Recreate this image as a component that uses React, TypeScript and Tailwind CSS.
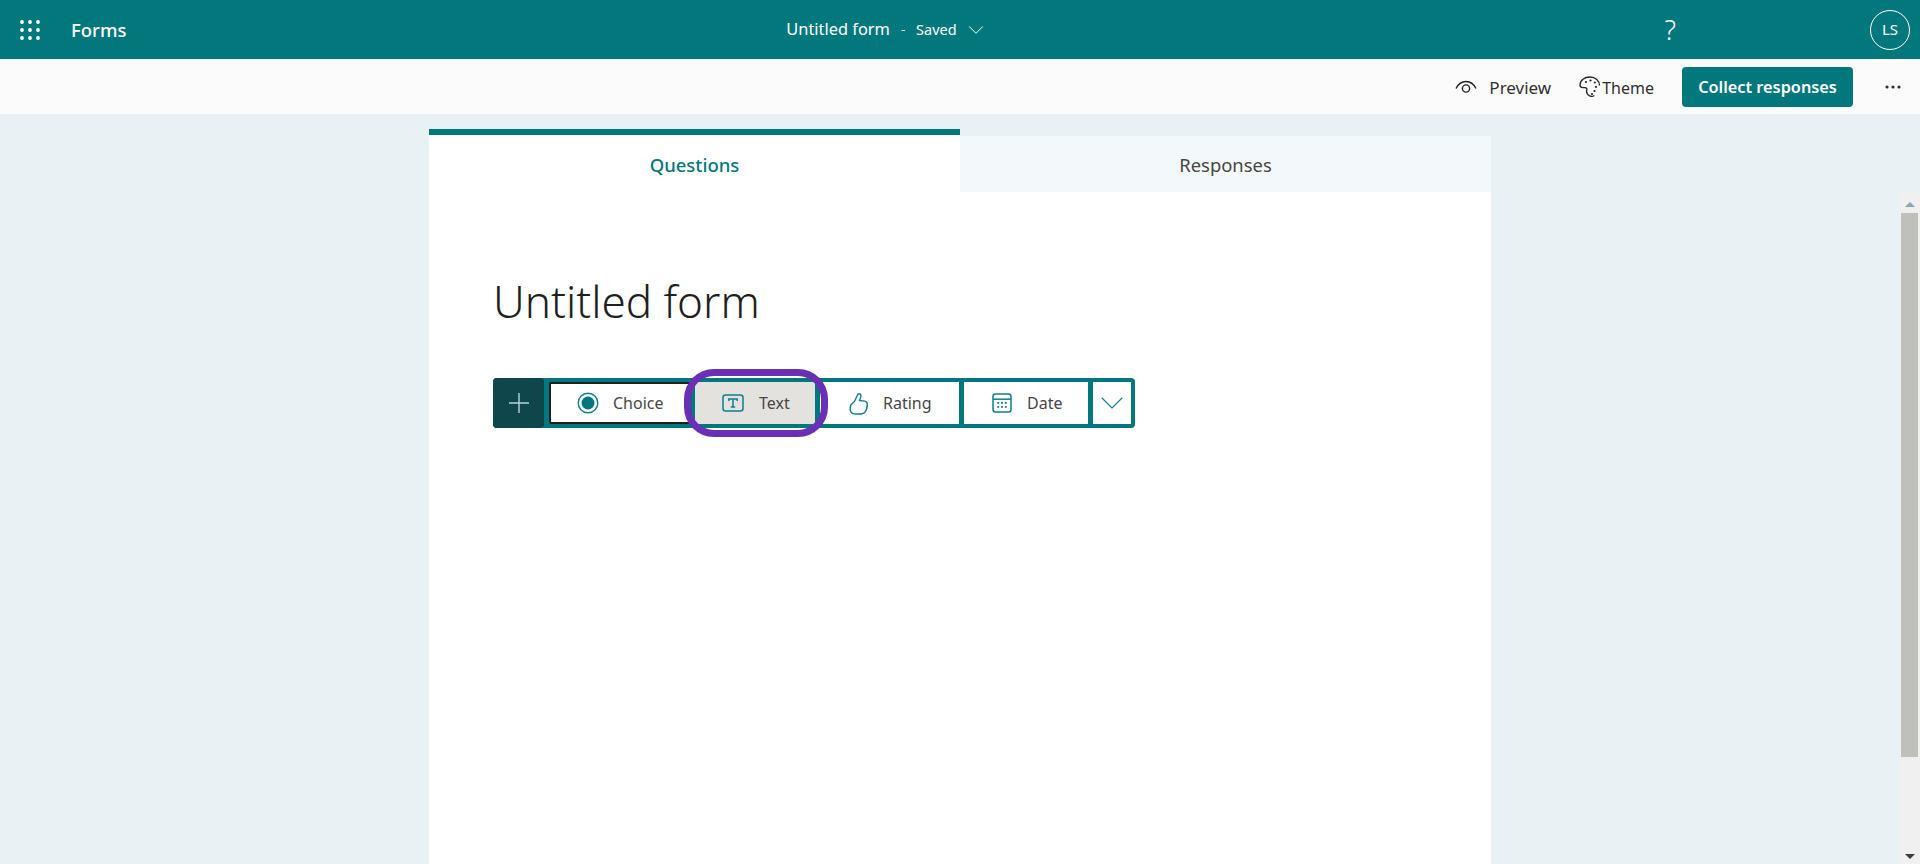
import { ChevronDown } from 'lucide-react';

const font = { fontFamily: '"Noto Sans", "Open Sans", sans-serif' };

function Waffle() {
  return (
    <svg width="20" height="20" viewBox="0 0 20 20" fill="#fff">
      {[2, 10, 18].map((y) =>
        [2, 10, 18].map((x) => <circle key={`${x}-${y}`} cx={x} cy={y} r="1.9" />),
      )}
    </svg>
  );
}

function EyeIcon() {
  return (
    <svg width="22" height="14" viewBox="0 0 22 14" fill="none" stroke="#242424" strokeWidth="1.4">
      <path d="M1 8.5C3.5 3.5 7 1.5 11 1.5s7.5 2 10 7" />
      <circle cx="11" cy="8.5" r="3.6" />
    </svg>
  );
}

function PaletteIcon() {
  return (
    <svg width="22" height="22" viewBox="0 0 22 22" fill="none" stroke="#242424" strokeWidth="1.3">
      <path d="M20.5 9.5C20.5 5 16.5 1 11 1 5.5 1 1 4.5 1 9c0 1.8 1.3 2.6 3 2.6h1.8c1.7 0 2.4 1 2 2.3-.5 1.9.1 4.6 2.9 6 2 .9 3.6.6 4.6-.5" />
      <circle cx="7" cy="6" r="1.1" fill="#242424" stroke="none" />
      <circle cx="11.5" cy="4.5" r="1.1" fill="#242424" stroke="none" />
      <circle cx="15.8" cy="6.5" r="1.1" fill="#242424" stroke="none" />
      <circle cx="17" cy="11" r="1.1" fill="#242424" stroke="none" />
      <circle cx="15.5" cy="15" r="1.1" fill="#242424" stroke="none" />
      <circle cx="13" cy="18" r="1.1" fill="#242424" stroke="none" />
    </svg>
  );
}

function MoreIcon() {
  return (
    <svg width="16" height="4" viewBox="0 0 16 4" fill="#323130">
      <circle cx="2" cy="2" r="1.6" />
      <circle cx="8" cy="2" r="1.6" />
      <circle cx="14" cy="2" r="1.6" />
    </svg>
  );
}

function RadioIcon() {
  return (
    <svg width="22" height="22" viewBox="0 0 22 22" fill="none">
      <circle cx="11" cy="11" r="9.8" stroke="#0f7f8c" strokeWidth="1.4" />
      <circle cx="11" cy="11" r="6.5" fill="#03787c" />
    </svg>
  );
}

function TextIcon() {
  return (
    <svg width="22" height="18" viewBox="0 0 22 18" fill="none" stroke="#0f7f8c" strokeWidth="1.5">
      <rect x="1" y="1" width="20" height="16" rx="2.5" />
      <path d="M6.8 7V5h8.4v2M11 5v8M8.8 13h4.4" />
    </svg>
  );
}

function ThumbIcon() {
  return (
    <svg width="20" height="23" viewBox="0 0 20 23" fill="none" stroke="#0f7f8c" strokeWidth="1.4" strokeLinejoin="round">
      <path d="M2 12.5 5.5 9.5 8.5 3c.4-1.6 3-1.7 3.4.3.3 1.6-.8 4-1.4 5.2l5.2.6c2 .3 2.6 1.5 2.6 3 0 2.8-1 6.6-2.6 8.4-1 1-2.4 1.5-4.2 1.5H7c-2.5 0-4.6-.9-5.4-2.8-.6-1.6-.4-4.2.4-6.7Z" />
    </svg>
  );
}

function CalendarIcon() {
  return (
    <svg width="20" height="20" viewBox="0 0 20 20" fill="none">
      <rect x="1" y="1" width="18" height="18" rx="2.5" stroke="#0f7f8c" strokeWidth="1.5" />
      <path d="M1 6.2h18" stroke="#0f7f8c" strokeWidth="1.5" />
      {[6.2, 10, 13.8].map((x) => (
        <rect key={x} x={x - 0.9} y="9" width="1.8" height="1.8" fill="#0f7f8c" />
      ))}
      {[6.2, 10, 13.8].map((x) => (
        <rect key={x} x={x - 0.9} y="13" width="1.8" height="1.8" fill="#0f7f8c" />
      ))}
    </svg>
  );
}

export default function App() {
  return (
    <div className="flex h-[864px] flex-col overflow-hidden bg-[#e9f1f4]" style={font}>
      <header className="flex h-[59px] shrink-0 items-center bg-[#03787c] text-white">
        <div className="flex w-[60px] justify-center">
          <Waffle />
        </div>
        <span className="ml-[11px] text-[18.5px] font-medium">Forms</span>
        <div className="flex flex-1 items-center justify-center pr-[16px]">
          <span className="text-[16.4px]">Untitled form</span>
          <span className="ml-[11px] text-[13px]">-</span>
          <span className="ml-[11px] text-[14.5px]">Saved</span>
          <ChevronDown size={26} strokeWidth={0.9} className="ml-[6px]" />
        </div>
        <span className="mr-[194px] text-[27px] leading-none font-light">?</span>
        <div className="mr-[10px] flex h-10 w-10 items-center justify-center rounded-full border border-white text-[15px]">
          LS
        </div>
      </header>

      <div className="flex h-[55px] shrink-0 items-center justify-end bg-[#fbfbfb] text-[#323130]">
        <EyeIcon />
        <span className="ml-[12px] pt-[2px] text-[17px]">Preview</span>
        <div className="ml-[28px]">
          <PaletteIcon />
        </div>
        <span className="ml-[1px] pt-[2px] text-[16px]">Theme</span>
        <button className="ml-[28px] h-10 w-[171px] rounded bg-[#03787c] pt-[2px] text-[16.3px] font-semibold text-white">
          Collect responses
        </button>
        <div className="mr-[19px] ml-[32px]">
          <MoreIcon />
        </div>
      </div>

      <main className="relative flex-1 pt-[15px]">
        <div className="mx-auto flex h-full w-[1062px] flex-col bg-white">
          <div className="flex h-[63px] shrink-0">
            <div className="flex w-1/2 items-center justify-center border-t-[6px] border-[#03787c] pt-[2px] text-[18.5px] font-medium text-[#03787c]">
              Questions
            </div>
            <div className="flex w-1/2 flex-col">
              <div className="h-[7px] bg-[#e9f1f4]" />
              <div className="flex flex-1 items-center justify-center bg-[#f3f8fa] pt-[2px] text-[18.4px] text-[#484644]">
                Responses
              </div>
            </div>
          </div>

          <div className="px-[64px] pt-[86px]">
            <h1 className="text-[44px] leading-[46px] font-light text-[#1f1f1f]">Untitled form</h1>

            <div className="mt-[54px] flex h-[50px] w-[642px] rounded bg-[#03787c] text-[16px] text-[#484644]">
              <div className="flex w-[51px] shrink-0 items-center justify-center rounded bg-[#0f464c]">
                <svg width="20" height="20" viewBox="0 0 20 20" stroke="#b7d4dc" strokeWidth="1.4">
                  <path d="M10 0v20M0 10h20" />
                </svg>
              </div>
              <div className="relative flex flex-1 gap-[5px] py-[4px] pr-[4px] pl-[5px]">
                <div className="flex w-[141px] shrink-0 items-center gap-[14px] rounded-[2px] border-[2px] border-[#1f1f1f] bg-white pl-[26px]">
                  <RadioIcon />
                  <span>Choice</span>
                </div>
                <div className="flex w-[120px] shrink-0 items-center gap-[15px] rounded-[2px] bg-[#e3e2df] pl-[27px]">
                  <TextIcon />
                  <span>Text</span>
                </div>
                <div className="flex w-[139px] shrink-0 items-center gap-[14px] bg-white pl-[29px]">
                  <ThumbIcon />
                  <span>Rating</span>
                </div>
                <div className="flex w-[124px] shrink-0 items-center gap-[15px] bg-white pl-[28px]">
                  <CalendarIcon />
                  <span>Date</span>
                </div>
                <div className="flex w-[38px] shrink-0 items-center justify-center overflow-hidden bg-white">
                  <ChevronDown size={40} strokeWidth={0.65} className="shrink-0 text-[#0f7f8c]" />
                </div>
                {/* annotation ring drawn over the Text button */}
                <div className="absolute top-[-9px] left-[140px] h-[68px] w-[144px] rounded-[30px] border-[7px] border-[#6a2fb5]" />
              </div>
            </div>
          </div>
        </div>

        {/* window scrollbar */}
        <div className="absolute top-[78px] right-0 bottom-0 flex w-[21px] flex-col items-center bg-[#f0f0f0]">
          <div className="flex h-[21px] w-full items-center justify-center pt-[3px]">
            <div className="h-0 w-0 border-x-[5px] border-b-[5px] border-x-transparent border-b-[#8ea3ad]" />
          </div>
          <div className="h-[544px] w-[17px] bg-[#bfbfbc]" />
          <div className="flex-1" />
          <div className="flex h-[20px] w-full items-center justify-center pt-[4px]">
            <div className="h-0 w-0 border-x-[5px] border-t-[5px] border-x-transparent border-t-[#3c3c3c]" />
          </div>
        </div>
      </main>
    </div>
  );
}
